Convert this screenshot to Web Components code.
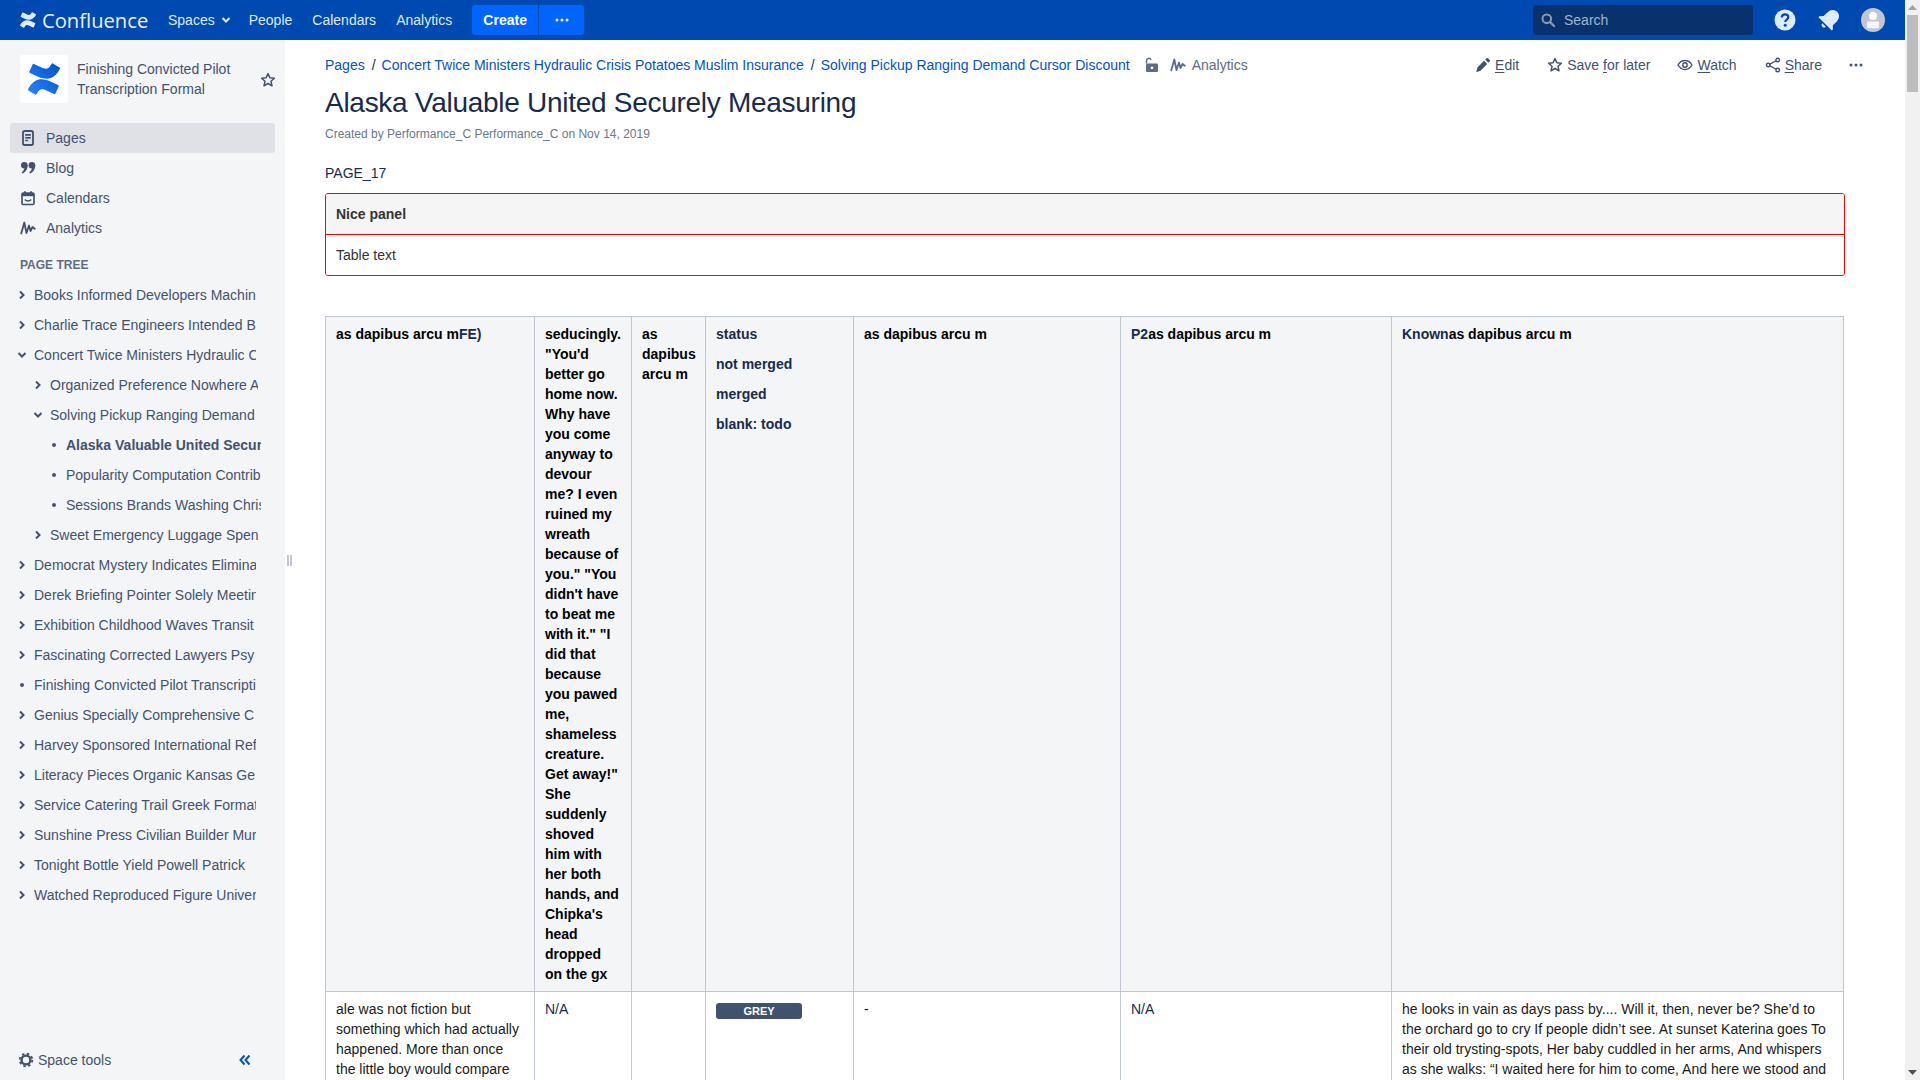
<!DOCTYPE html>
<html lang="en">
<head>
<meta charset="utf-8">
<title>Alaska Valuable United Securely Measuring</title>
<style>
    html, body { margin: 0; padding: 0; height: 100%; overflow: hidden; background: #fff; }
    body { font: 14px/20px "Liberation Sans", Arial, sans-serif; color: #172B4D; }
</style>
</head>
<body>
<conf-app>
    <conf-topbar slot="top"></conf-topbar>
    <conf-sidebar slot="side" space="Finishing Convicted Pilot Transcription Formal">
        <conf-nav-item icon="pages" active>Pages</conf-nav-item>
        <conf-nav-item icon="blog">Blog</conf-nav-item>
        <conf-nav-item icon="calendar">Calendars</conf-nav-item>
        <conf-nav-item icon="analytics">Analytics</conf-nav-item>
        <conf-tree slot="tree">
            <conf-tree-item kind="right">Books Informed Developers Machin</conf-tree-item>
            <conf-tree-item kind="right">Charlie Trace Engineers Intended B</conf-tree-item>
            <conf-tree-item kind="down">Concert Twice Ministers Hydraulic C</conf-tree-item>
            <conf-tree-item kind="right" level="1">Organized Preference Nowhere A</conf-tree-item>
            <conf-tree-item kind="down" level="1">Solving Pickup Ranging Demand</conf-tree-item>
            <conf-tree-item kind="dot" level="2" current>Alaska Valuable United Secur</conf-tree-item>
            <conf-tree-item kind="dot" level="2">Popularity Computation Contrib</conf-tree-item>
            <conf-tree-item kind="dot" level="2">Sessions Brands Washing Chris</conf-tree-item>
            <conf-tree-item kind="right" level="1">Sweet Emergency Luggage Spen</conf-tree-item>
            <conf-tree-item kind="right">Democrat Mystery Indicates Elimina</conf-tree-item>
            <conf-tree-item kind="right">Derek Briefing Pointer Solely Meetin</conf-tree-item>
            <conf-tree-item kind="right">Exhibition Childhood Waves Transit</conf-tree-item>
            <conf-tree-item kind="right">Fascinating Corrected Lawyers Psy</conf-tree-item>
            <conf-tree-item kind="dot">Finishing Convicted Pilot Transcripti</conf-tree-item>
            <conf-tree-item kind="right">Genius Specially Comprehensive C</conf-tree-item>
            <conf-tree-item kind="right">Harvey Sponsored International Ref</conf-tree-item>
            <conf-tree-item kind="right">Literacy Pieces Organic Kansas Ge</conf-tree-item>
            <conf-tree-item kind="right">Service Catering Trail Greek Format</conf-tree-item>
            <conf-tree-item kind="right">Sunshine Press Civilian Builder Mur</conf-tree-item>
            <conf-tree-item kind="right">Tonight Bottle Yield Powell Patrick</conf-tree-item>
            <conf-tree-item kind="right">Watched Reproduced Figure Univer</conf-tree-item>
        </conf-tree>
    </conf-sidebar>
    <conf-page slot="main"></conf-page>
    <conf-scrollbar slot="bar"></conf-scrollbar>
</conf-app>

<script>
// Icons shared by all the elements, 16x16 unless the element says otherwise
const CONF_MARK = "M.87 18.257c-.248.382-.53.875-.763 1.245a.764.764 0 0 0 .255 1.04l4.965 3.054a.764.764 0 0 0 1.058-.26c.199-.332.454-.763.733-1.221 1.967-3.247 3.945-2.853 7.508-1.146l4.957 2.337a.764.764 0 0 0 1.028-.382l2.364-5.346a.764.764 0 0 0-.382-1 599.851 599.851 0 0 1-4.965-2.361C10.911 10.97 5.224 11.185.87 18.257zM23.131 5.743c.248-.382.53-.875.764-1.245a.764.764 0 0 0-.256-1.04L18.675.404a.764.764 0 0 0-1.058.26c-.2.332-.455.763-.734 1.221-1.966 3.247-3.945 2.853-7.508 1.146L4.437.694a.764.764 0 0 0-1.027.382L1.046 6.422a.764.764 0 0 0 .382 1c1.039.49 3.105 1.467 4.965 2.361 6.698 3.246 12.384 3.034 16.738-4.04z";
const ICONS = {
    pages: `<rect x="3" y="1" width="10" height="14" rx="1.6" fill="none" stroke="currentColor" stroke-width="1.8"/><rect x="5.2" y="4" width="5.6" height="1.8" fill="currentColor"/><rect x="5.2" y="7" width="5.6" height="1.6" fill="currentColor"/><rect x="5.2" y="9.8" width="3" height="1.4" fill="currentColor"/>`,
    blog: `<circle cx="4.300" cy="5.300" r="3.300" fill="currentColor"/><path d="M7.600 5.300c0 4.200-2.200 7-5.200 8.200l-.8-1.300c1.900-1.100 2.900-2.900 2.900-5z" fill="currentColor"/><circle cx="11.900" cy="5.300" r="3.300" fill="currentColor"/><path d="M15.200 5.300c0 4.200-2.200 7-5.200 8.200l-.8-1.300c1.900-1.100 2.900-2.900 2.900-5z" fill="currentColor"/>`,
    calendar: `<rect x="2" y="3.200" width="12" height="11.300" rx="1.300" fill="none" stroke="currentColor" stroke-width="1.700"/><rect x="2" y="3.200" width="12" height="3" fill="currentColor"/><rect x="4" y="1.300" width="1.800" height="3" fill="currentColor"/><rect x="10.200" y="1.300" width="1.800" height="3" fill="currentColor"/><path d="M4.800 9.500c1.500 2 4.900 2 6.400 0" fill="none" stroke="currentColor" stroke-width="1.400"/>`,
    analytics: `<path d="M1.200 13.500 4.300 2.500 6.500 13 9 5.500 10.500 11 12.500 7 14.800 8.800" fill="none" stroke="currentColor" stroke-width="1.800" stroke-linecap="round" stroke-linejoin="round"/>`,
    star: `<path d="M8 1.600l1.900 4.200 4.500.5-3.400 3 1 4.500L8 11.500l-4 2.300 1-4.500-3.400-3 4.500-.5z" fill="none" stroke="currentColor" stroke-width="1.500" stroke-linejoin="round"/>`,
    pencil: `<path d="M11.500 1.300a1 1 0 0 1 1.400 0l1.800 1.800a1 1 0 0 1 0 1.400l-1.300 1.300-3.200-3.200zM9 3.800l3.200 3.200-6.700 6.700-3.600 1.300a.4.4 0 0 1-.5-.5l1-3.900z" fill="currentColor"/>`,
    eye: `<path d="M1 8c1.700-3 4.100-4.500 7-4.500S13.300 5 15 8c-1.700 3-4.100 4.500-7 4.500S2.700 11 1 8z" fill="none" stroke="currentColor" stroke-width="1.400"/><circle cx="8" cy="8" r="2.200" fill="none" stroke="currentColor" stroke-width="1.400"/>`,
    share: `<path d="M12.500 3 3.500 8l9 5" fill="none" stroke="currentColor" stroke-width="1.400"/><circle cx="12.700" cy="3" r="1.800" fill="#fff" stroke="currentColor" stroke-width="1.400"/><circle cx="3.200" cy="8" r="1.800" fill="#fff" stroke="currentColor" stroke-width="1.400"/><circle cx="12.700" cy="13" r="1.800" fill="#fff" stroke="currentColor" stroke-width="1.400"/>`,
    dots: `<circle cx="3" cy="8" r="1.500" fill="currentColor"/><circle cx="8" cy="8" r="1.500" fill="currentColor"/><circle cx="13" cy="8" r="1.500" fill="currentColor"/>`,
    lock: `<path d="M2.500 6.500V3.800a2.400 2.400 0 0 1 4.600-1" fill="none" stroke="currentColor" stroke-width="1.500"/><path fill-rule="evenodd" d="M3.300 6.500h9.400a1.300 1.300 0 0 1 1.300 1.300v5.900a1.300 1.300 0 0 1-1.300 1.300H3.300A1.300 1.300 0 0 1 2 13.700V7.800a1.300 1.300 0 0 1 1.300-1.300zM8 9.400a1.400 1.400 0 1 0 0 2.800 1.400 1.400 0 0 0 0-2.800z" fill="currentColor"/>`,
    gear: `<circle cx="8" cy="8" r="4.400" fill="none" stroke="currentColor" stroke-width="2.400"/><circle cx="8" cy="8" r="6.300" fill="none" stroke="currentColor" stroke-width="1.800" stroke-dasharray="2.500 2.450"/>`,
    search: `<circle cx="6.800" cy="6.800" r="4.300" fill="none" stroke="currentColor" stroke-width="2"/><path d="M10 10l4 4" stroke="currentColor" stroke-width="2.200" stroke-linecap="round"/>`,
    right: `<path d="M6 4.500 9.500 8 6 11.500" fill="none" stroke="currentColor" stroke-width="2"/>`,
    down: `<path d="M4.500 6 8 9.500 11.500 6" fill="none" stroke="currentColor" stroke-width="2"/>`,
    dot: `<circle cx="8" cy="8" r="2" fill="currentColor"/>`,
    collapse: `<path d="M7.500 3.500 3.500 8l4 4.500M12.500 3.500 8.500 8l4 4.500" fill="none" stroke="currentColor" stroke-width="2"/>`
};
function icon(name, size = 16) {
    return `<svg width="${size}" height="${size}" viewBox="0 0 16 16" aria-hidden="true">${ICONS[name]}</svg>`;
}

class ConfApp extends HTMLElement {
    constructor() {
        super();
        this.attachShadow({ mode: "open" }).innerHTML = `
            <style>
                :host { display: flex; width: 1920px; height: 1080px; overflow: hidden; }
                .frame { flex: 1 1 auto; min-width: 0; display: flex; flex-direction: column; }
                .body { flex: 1 1 auto; min-height: 0; display: flex; }
                ::slotted([slot="bar"]) { flex: 0 0 15px; }
            </style>
            <div class="frame">
                <slot name="top"></slot>
                <div class="body">
                    <slot name="side"></slot>
                    <slot name="main"></slot>
                </div>
            </div>
            <slot name="bar"></slot>
        `;
    }
}

class ConfTopbar extends HTMLElement {
    connectedCallback() {
        this.attachShadow({ mode: "open" }).innerHTML = `
            <style>
                :host { display: flex; align-items: center; height: 40px; flex: 0 0 40px; background: #0049B0; color: #DEEBFF; padding: 0 20px; box-sizing: border-box; }
                .logo { display: flex; align-items: center; width: 148px; flex: none; color: #DEEBFF; gap: 6px; }
                .logo span { font: 400 20.2px/40px "Open Sans", sans-serif; color: #E9F1FF; }
                nav { display: flex; align-items: center; gap: 20px; }
                nav a { color: #DEEBFF; }
                .spaces { display: flex; align-items: center; gap: 3px; margin-right: -5px; }
                .create { display: flex; gap: 1px; margin-left: 20px; }
                .create div { height: 30px; background: #0065FF; color: #fff; display: flex; align-items: center; justify-content: center; }
                .create .c { width: 66px; border-radius: 3px 0 0 3px; font-weight: 700; }
                .create .m { width: 45px; border-radius: 0 3px 3px 0; }
                .right { margin-left: auto; display: flex; align-items: center; margin-right: 0; }
                .search { width: 220px; height: 30px; border-radius: 3px; background: #09326C; color: #9FB3D1; display: flex; align-items: center; box-sizing: border-box; padding-left: 7px; gap: 8px; margin-right: 19px; }
                .search svg { color: #8B9BB4; }
                .tools { display: flex; gap: 18px; margin-right: -1px; }
                .tools svg { display: block; width: 26px; height: 26px; }
            </style>
            <div class="logo">
                <svg width="16" height="16" viewBox="0 0 24 24"><path d="${CONF_MARK}" fill="currentColor"/></svg>
                <span>Confluence</span>
            </div>
            <nav>
                <a class="spaces">Spaces ${icon("down")}</a>
                <a>People</a>
                <a>Calendars</a>
                <a>Analytics</a>
            </nav>
            <div class="create">
                <div class="c">Create</div>
                <div class="m">${icon("dots")}</div>
            </div>
            <div class="right">
                <div class="search">${icon("search")}<span>Search</span></div>
                <div class="tools">
                    <svg viewBox="0 0 26 26"><circle cx="13" cy="13" r="10.500" fill="#DEEBFF"/><path d="M9.800 10.500c0-2 1.400-3.200 3.300-3.200s3.200 1.100 3.200 2.800c0 2.500-3.100 2.500-3.100 5" fill="none" stroke="#0049B0" stroke-width="2.200"/><circle cx="13.200" cy="18.300" r="1.500" fill="#0049B0"/></svg>
                    <svg viewBox="0 0 26 26"><g transform="rotate(45 13 13)" fill="#DEEBFF"><path d="M13 1.500c4 0 6.500 3 6.500 7v5.500l3 3.200v1.300h-19v-1.300l3-3.200V8.500c0-4 2.500-7 6.500-7z"/><path d="M10.500 20h5a2.500 2.500 0 0 1-5 0z"/></g></svg>
                    <svg viewBox="0 0 26 26"><circle cx="13" cy="13" r="12" fill="#C1C7D0"/><circle cx="13" cy="9" r="3.900" fill="#fff"/><path d="M7 14.600h12v4.800c0 1.200-.8 1.800-1.800 1.800H8.800c-1 0-1.800-.6-1.800-1.800z" fill="#F4F5F7"/></svg>
                </div>
            </div>
        `;
    }
}

class ConfSidebar extends HTMLElement {
    connectedCallback() {
        const space = this.getAttribute("space");
        this.attachShadow({ mode: "open" }).innerHTML = `
            <style>
                :host { display: flex; flex-direction: column; width: 285px; flex: 0 0 285px; box-sizing: border-box; background: #F4F5F7; color: #42526E; height: 1040px; overflow: hidden; }
                .space { display: flex; align-items: center; padding: 15px 0 20px 20px; }
                .logo { width: 48px; height: 48px; flex: none; border-radius: 3px; background: #fff; display: flex; align-items: center; justify-content: center; }
                .name { width: 170px; margin-left: 9px; }
                .fav { margin-left: 13px; margin-top: 1px; display: flex; }
                .links { display: flex; flex-direction: column; padding: 0 10px; }
                h5 { margin: 14px 0 7px 20px; font: 700 12px/16px "Liberation Sans", sans-serif; color: #5E6C84; }
                .foot { margin-top: auto; height: 40px; display: flex; align-items: center; padding-left: 18px; position: relative; }
                .foot span { margin-left: 4px; }
                .foot .gear { display: flex; }
                .collapse { margin-left: 126px; display: flex; color: #0052CC; }
            </style>
            <div class="space">
                <div class="logo">
                    <svg width="32" height="32" viewBox="0 0 24 24">
                        <defs><linearGradient id="g" x1="0" y1="1" x2="1" y2="0"><stop offset="0" stop-color="#2684FF"/><stop offset="1" stop-color="#0052CC"/></linearGradient></defs>
                        <path d="${CONF_MARK}" fill="url(#g)"/>
                    </svg>
                </div>
                <div class="name">${space}</div>
                <div class="fav">${icon("star")}</div>
            </div>
            <div class="links"><slot></slot></div>
            <h5>PAGE TREE</h5>
            <slot name="tree"></slot>
            <div class="foot">
                <div class="gear">${icon("gear")}</div><span>Space tools</span>
                <div class="collapse">${icon("collapse")}</div>
            </div>
        `;
    }
}

class ConfNavItem extends HTMLElement {
    connectedCallback() {
        const name = this.getAttribute("icon");
        this.attachShadow({ mode: "open" }).innerHTML = `
            <style>
                :host { display: flex; align-items: center; height: 30px; border-radius: 3px; padding-left: 10px; gap: 10px; color: #42526E; }
                :host([active]) { background: #DFE1E6; }
                svg { display: block; }
            </style>
            ${icon(name)}<slot></slot>
        `;
    }
}

class ConfTree extends HTMLElement {
    constructor() {
        super();
        this.attachShadow({ mode: "open" }).innerHTML = `
            <style>:host { display: flex; flex-direction: column; }</style>
            <slot></slot>
        `;
    }
}

class ConfTreeItem extends HTMLElement {
    connectedCallback() {
        const level = Number(this.getAttribute("level") || 0);
        const kind = this.getAttribute("kind");
        // the tree clips its labels, a bit further right at each level
        const widths = [222, 208, 195];
        this.attachShadow({ mode: "open" }).innerHTML = `
            <style>
                :host { display: flex; align-items: center; height: 30px; color: #42526E; padding-left: ${14 + level * 16}px; gap: 4px; }
                :host([current]) { font-weight: 700; }
                svg { display: block; flex: none; }
                .t { width: ${widths[level]}px; overflow: hidden; white-space: nowrap; }
            </style>
            ${icon(kind)}<div class="t"><slot></slot></div>
        `;
    }
}

class ConfCrumb extends HTMLElement {
    constructor() {
        super();
        this.attachShadow({ mode: "open" }).innerHTML = `
            <style>
                :host { display: inline-flex; color: #0052CC; }
                :host(:not(:last-of-type))::after { content: "/"; color: #172B4D; margin: 0 6px 0 7px; }
            </style>
            <slot></slot>
        `;
    }
}

class ConfAction extends HTMLElement {
    connectedCallback() {
        const name = this.getAttribute("icon");
        this.attachShadow({ mode: "open" }).innerHTML = `
            <style>
                :host { display: flex; align-items: center; gap: 4px; color: #42526E; white-space: nowrap; margin-left: var(--gap, 28px); }
                svg { display: block; }
                span:empty { display: none; }
            </style>
            ${icon(name)}<span><slot></slot></span>
        `;
    }
}

class ConfPanel extends HTMLElement {
    connectedCallback() {
        this.attachShadow({ mode: "open" }).innerHTML = `
            <style>
                :host { display: block; border: 1px solid #f00; border-radius: 3px; color: #333; overflow: hidden; }
                header { box-sizing: border-box; padding: 0 10px; display: flex; align-items: center; background: #F5F5F5; border-bottom: 1px solid #f00; font-weight: 700; height: 41px; }
                div { height: 40px; padding: 0 10px; display: flex; align-items: center; background: #fff; }
            </style>
            <header>${this.getAttribute("title")}</header>
            <div><slot></slot></div>
        `;
        this.removeAttribute("title");
    }
}

class ConfLozenge extends HTMLElement {
    constructor() {
        super();
        this.attachShadow({ mode: "open" }).innerHTML = `
            <style>
                :host { display: block; width: 86px; height: 16px; background: #42526E; color: #fff; border-radius: 3px; font: 700 11px/16px "Liberation Sans", sans-serif; text-align: center; margin-top: 4px; }
            </style>
            <slot></slot>
        `;
    }
}

class ConfDataTable extends HTMLElement {
    connectedCallback() {
        this.attachShadow({ mode: "open" }).innerHTML = `
            <style>
                :host { display: block; color: #172B4D; }
                table { border-collapse: collapse; table-layout: fixed; width: 1519px; }
                th, td { border: 1px solid #C1C7D0; padding: 7px 10px; vertical-align: top; text-align: left; font-size: 14px; line-height: 20px; }
                th { background: #F4F5F7; font-weight: 700; color: #000; }
                td { color: #1a1a1a; }
                .n { color: #172B4D; }
                p { margin: 10px 0 0; }
                p:first-child { margin: 0; }
            </style>
            <table>
                <colgroup>
                    <col style="width:209px"><col style="width:97px"><col style="width:74px"><col style="width:148px"><col style="width:267px"><col style="width:271px"><col>
                </colgroup>
                <tr>
                    <th>as dapibus arcu m<span class="n">FE)</span></th>
                    <th>seducingly. "You'd better go home now. Why have you come anyway to devour me? I even ruined my wreath because of you." "You didn't have to beat me with it." "I did that because you pawed me, shameless creature. Get away!" She suddenly shoved him with her both hands, and Chipka's head dropped on the gx</th>
                    <th>as dapibus arcu m</th>
                    <th class="n"><p>status</p><p>not merged</p><p>merged</p><p>blank: todo</p></th>
                    <th>as dapibus arcu m</th>
                    <th><span class="n">P2</span>as dapibus arcu m</th>
                    <th><span class="n">Known</span>as dapibus arcu m</th>
                </tr>
                <tr>
                    <td>ale was not fiction but something which had actually happened. More than once the little boy would compare</td>
                    <td class="n">N/A</td>
                    <td></td>
                    <td><conf-lozenge>GREY</conf-lozenge></td>
                    <td>-</td>
                    <td class="n">N/A</td>
                    <td>he looks in vain as days pass by.... Will it, then, never be? She’d to the orchard go to cry If people didn’t see. At sunset Katerina goes To their old trysting-spots, Her baby cuddled in her arms, And whispers as she walks: “I waited here for him to come, And here we stood and</td>
                </tr>
            </table>
        `;
    }
}

class ConfPage extends HTMLElement {
    connectedCallback() {
        this.attachShadow({ mode: "open" }).innerHTML = `
            <style>
                :host { display: block; flex: 1 1 auto; min-width: 0; height: 1040px; overflow: hidden; box-sizing: border-box; padding: 15px 60px 0 40px; position: relative; background: #fff; }
                .grip { position: absolute; left: 2px; top: 515px; height: 11px; border-left: 2px solid #C1C7D0; border-right: 2px solid #C1C7D0; box-sizing: content-box; width: 1px; }
                .top { display: flex; align-items: center; height: 20px; }
                .crumbs { white-space: nowrap; display: flex; }
                .meta { display: flex; align-items: center; color: #5E6C84; margin-left: 14px; gap: 10px; }
                .meta svg { display: block; }
                .meta div { display: flex; align-items: center; gap: 6px; }
                .actions { margin-left: auto; display: flex; align-items: center; margin-right: -23px; }
                u { text-underline-offset: 2px; }
                h1 { font: 400 28px/32px "Liberation Sans", sans-serif; letter-spacing: -.01em; color: #172B4D; margin: 12px 0 0; }
                .by { font-size: 12px; line-height: 16px; color: #6B778C; margin-top: 7px; }
                .label { margin-top: 21px; height: 20px; color: #172B4D; }
                conf-panel { margin-top: 10px; }
                conf-data-table { margin-top: 40px; }
            </style>
            <div class="grip"></div>
            <div class="top">
                <div class="crumbs">
                    <conf-crumb>Pages</conf-crumb><conf-crumb>Concert Twice Ministers Hydraulic Crisis Potatoes Muslim Insurance</conf-crumb><conf-crumb>Solving Pickup Ranging Demand Cursor Discount</conf-crumb>
                </div>
                <div class="meta">
                    ${icon("lock")}
                    <div>${icon("analytics")}<span>Analytics</span></div>
                </div>
                <div class="actions">
                    <conf-action icon="pencil"><u>E</u>dit</conf-action>
                    <conf-action icon="star">Save <u>f</u>or later</conf-action>
                    <conf-action icon="eye" style="--gap:27px"><u>W</u>atch</conf-action>
                    <conf-action icon="share"><u>S</u>hare</conf-action>
                    <conf-action icon="dots" style="--gap:26px"></conf-action>
                </div>
            </div>
            <h1>Alaska Valuable United Securely Measuring</h1>
            <div class="by">Created by Performance_C Performance_C on Nov 14, 2019</div>
            <div class="label">PAGE_17</div>
            <conf-panel title="Nice panel">Table text</conf-panel>
            <conf-data-table></conf-data-table>
        `;
    }
}

class ConfScrollbar extends HTMLElement {
    constructor() {
        super();
        this.attachShadow({ mode: "open" }).innerHTML = `
            <style>
                :host { display: flex; flex-direction: column; align-items: center; width: 15px; height: 1080px; background: #F1F1F1; }
                .arrow { height: 15px; flex: none; display: flex; align-items: center; justify-content: center; }
                .thumb { width: 11px; height: 77px; background: #BDBDBD; flex: none; }
                .space { flex: 1; }
            </style>
            <div class="arrow"><svg width="9" height="5"><path d="M0 5 4.500 0 9 5z" fill="#A3A3A3"/></svg></div>
            <div class="thumb"></div>
            <div class="space"></div>
            <div class="arrow"><svg width="9" height="5"><path d="M0 0 4.500 5 9 0z" fill="#505050"/></svg></div>
        `;
    }
}

customElements.define("conf-app", ConfApp);
customElements.define("conf-topbar", ConfTopbar);
customElements.define("conf-sidebar", ConfSidebar);
customElements.define("conf-nav-item", ConfNavItem);
customElements.define("conf-tree", ConfTree);
customElements.define("conf-tree-item", ConfTreeItem);
customElements.define("conf-crumb", ConfCrumb);
customElements.define("conf-action", ConfAction);
customElements.define("conf-panel", ConfPanel);
customElements.define("conf-lozenge", ConfLozenge);
customElements.define("conf-data-table", ConfDataTable);
customElements.define("conf-page", ConfPage);
customElements.define("conf-scrollbar", ConfScrollbar);
</script>
</body>
</html>
